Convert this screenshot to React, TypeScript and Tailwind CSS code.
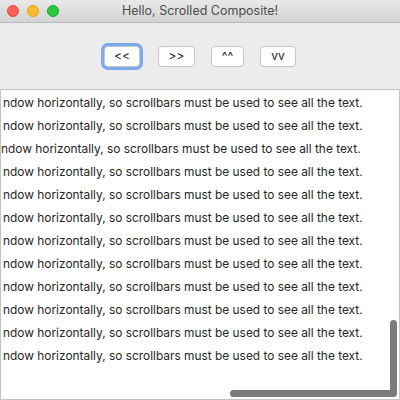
import React from "react";

const LINE = "ndow horizontally, so scrollbars must be used to see all the text.";

const Btn = ({label, w, focused}: {label: string; w: string; focused?: boolean}) => (
    <div className={`${w} h-[21px] rounded-[4px] bg-white border border-[#c6c6c6] flex items-center justify-center text-[12px] text-[#222] ${focused ? "ring-[3px] ring-[#7da9ee]" : ""}`}>
        {label}
    </div>
);

export default function App() {
    const lines = Array.from({length: 12}, (_, i) => i);
    return (
        <div className="w-[400px] h-[400px] flex flex-col bg-[#ececec] overflow-hidden" style={{fontFamily: "Inter, 'Noto Sans', sans-serif"}}>
            <div className="h-[23px] flex items-center relative bg-gradient-to-b from-[#e8e8e8] to-[#d4d4d4] border-b border-[#b9b9b9]">
                <div className="flex gap-[8px] pl-[7px]">
                    <span className="w-[12px] h-[12px] rounded-full bg-[#fe5f57] border border-[#e2463f]" />
                    <span className="w-[12px] h-[12px] rounded-full bg-[#febc2e] border border-[#e1a116]" />
                    <span className="w-[12px] h-[12px] rounded-full bg-[#28c840] border border-[#14ae2a]" />
                </div>
                <div className="absolute inset-0 flex items-center justify-center text-[12.5px] text-[#4d4d4d]">
                    Hello, Scrolled Composite!
                </div>
            </div>
            <div className="h-[66px] flex items-center pl-[104px]">
                <Btn label="<<" w="w-[36px]" focused />
                <div className="ml-[18px]"><Btn label=">>" w="w-[37px]" /></div>
                <div className="ml-[16px]"><Btn label="^^" w="w-[33px]" /></div>
                <div className="ml-[16px]"><Btn label="vv" w="w-[36px]" /></div>
            </div>
            <div className="flex-1 relative bg-white border border-[#c4c4c4] overflow-hidden">
                <div className="flex flex-col pt-[1px]">
                    {lines.map((i) => (
                        <div key={i} className={`h-[23px] flex items-center whitespace-nowrap text-[11.9px] text-[#262626] ${i === 2 ? "pl-[0px]" : "pl-[2px]"}`}>
                            {LINE}
                        </div>
                    ))}
                </div>
                <div className="absolute right-[2px] top-[230px] w-[7px] h-[74px] rounded-full bg-[#7b7b7b]" />
                <div className="absolute left-[229px] bottom-[2px] h-[7px] w-[167px] rounded-full bg-[#7b7b7b]" />
            </div>
        </div>
    );
}
